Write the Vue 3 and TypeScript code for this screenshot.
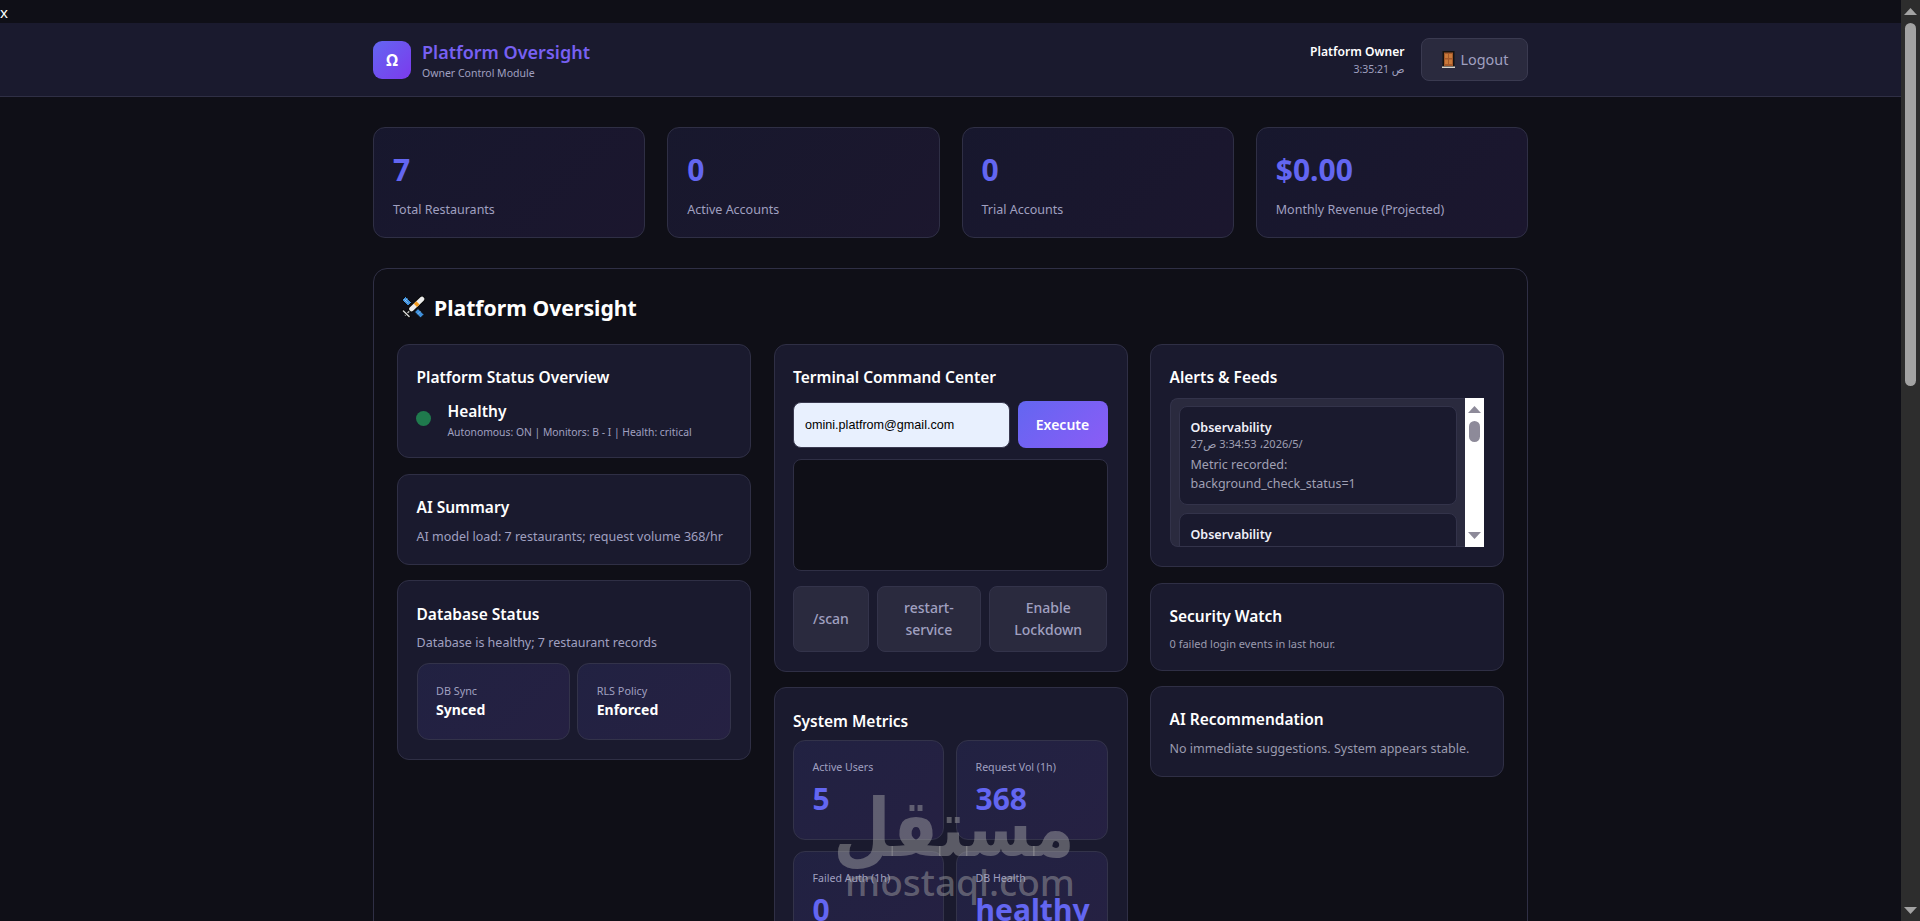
<script setup lang="ts">
const stats = [
  { value: '7', label: 'Total Restaurants' },
  { value: '0', label: 'Active Accounts' },
  { value: '0', label: 'Trial Accounts' },
  { value: '$0.00', label: 'Monthly Revenue (Projected)' },
]
const metrics = [
  { label: 'Active Users', value: '5' },
  { label: 'Request Vol (1h)', value: '368' },
  { label: 'Failed Auth (1h)', value: '0' },
  { label: 'DB Health', value: 'healthy' },
]
const feedDate = '27\u200f/5\u200f/2026\u060c 3:34:53 \u0635'
const clock = '3:35:21 \u0635'
</script>

<template>
  <div class="shell">
    <div class="page">
      <div class="stray">x</div>
      <header class="topbar">
        <div class="wrap topbar-in">
          <div class="brand">
            <div class="logo">Ω</div>
            <div>
              <div class="brand-title">Platform Oversight</div>
              <div class="brand-sub">Owner Control Module</div>
            </div>
          </div>
          <div class="user">
            <div class="user-info">
              <div class="user-name">Platform Owner</div>
              <div class="user-time">{{ clock }}</div>
            </div>
            <button class="logout" type="button">
              <svg class="door" viewBox="0 0 13 17" width="13" height="17" aria-hidden="true">
                <rect x="0.5" y="0" width="12" height="17" fill="#17130f" />
                <rect x="2" y="1.5" width="9" height="13.5" fill="#a4592a" />
                <path d="M3 3h3v4H3zM7 3h3v4H7zM3 8.5h3V13H3zM7 8.5h3V13H7z" fill="#c9793a" />
                <path d="M0 15.5h13V17H0z" fill="#d8d4cc" />
              </svg>
              <span>Logout</span>
            </button>
          </div>
        </div>
      </header>

      <main class="wrap content">
        <section class="stats">
          <div v-for="s in stats" :key="s.label" class="stat">
            <div class="stat-value">{{ s.value }}</div>
            <div class="stat-label">{{ s.label }}</div>
          </div>
        </section>

        <section class="panel">
          <h2 class="panel-title">
            <svg class="sat" viewBox="5 4 24 24" width="24" height="24" aria-hidden="true">
              <path d="M9.5 4.5L15.5 10.5 12 14 6 8z" fill="#3f8fdc" stroke="#0a0a0a" stroke-width="1" />
              <path d="M22 16.5L28 22.5 24.5 26 18.5 20z" fill="#3f8fdc" stroke="#0a0a0a" stroke-width="1" />
              <path d="M8.2 7.2l4 4M11.5 6.5l-3 3M24.5 19.2l-3 3" stroke="#9fd0f5" stroke-width="0.7" fill="none" />
              <path d="M9 23.5L15 17.5" stroke="#0a0a0a" stroke-width="3.4" />
              <path d="M9 23.5L15 17.5" stroke="#b9b9b9" stroke-width="1.6" />
              <path d="M7 18.5L13.5 25" stroke="#0a0a0a" stroke-width="3" stroke-linecap="round" />
              <path d="M7.4 18.9L13.1 24.6" stroke="#d8d8d8" stroke-width="1.4" stroke-linecap="round" />
              <path d="M26 7L15.5 17" stroke="#0a0a0a" stroke-width="6.6" stroke-linecap="round" />
              <path d="M26 7L15.5 17" stroke="#ececec" stroke-width="4.6" stroke-linecap="round" />
              <path d="M22 10.8L19.4 13.3" stroke="#f19a1f" stroke-width="4.6" />
            </svg>
            <span>Platform Oversight</span>
          </h2>

          <div class="columns">
            <div class="col">
              <article class="card">
                <h3 class="card-title status-title">Platform Status Overview</h3>
                <div class="status">
                  <span class="dot"></span>
                  <div>
                    <div class="status-name">Healthy</div>
                    <div class="status-sub">Autonomous: ON | Monitors: B - I | Health: critical</div>
                  </div>
                </div>
              </article>
              <article class="card">
                <h3 class="card-title">AI Summary</h3>
                <p class="card-text">AI model load: 7 restaurants; request volume 368/hr</p>
              </article>
              <article class="card card-db">
                <h3 class="card-title low-title">Database Status</h3>
                <p class="card-text">Database is healthy; 7 restaurant records</p>
                <div class="db-grid">
                  <div class="tile db-tile">
                    <div class="db-label">DB Sync</div>
                    <div class="db-value">Synced</div>
                  </div>
                  <div class="tile db-tile">
                    <div class="db-label">RLS Policy</div>
                    <div class="db-value">Enforced</div>
                  </div>
                </div>
              </article>
            </div>

            <div class="col">
              <article class="card card-term">
                <h3 class="card-title term-title">Terminal Command Center</h3>
                <div class="cmd-row">
                  <input class="cmd-input" value="omini.platfrom@gmail.com" />
                  <button class="exec" type="button">Execute</button>
                </div>
                <div class="term-out"></div>
                <div class="quick">
                  <button class="quick-btn" type="button">/scan</button>
                  <button class="quick-btn" type="button">restart-service</button>
                  <button class="quick-btn" type="button">Enable Lockdown</button>
                </div>
              </article>
              <article class="card">
                <h3 class="card-title low-title metrics-title">System Metrics</h3>
                <div class="metrics">
                  <div v-for="m in metrics" :key="m.label" class="tile metric">
                    <div class="metric-label">{{ m.label }}</div>
                    <div class="metric-value">{{ m.value }}</div>
                  </div>
                </div>
              </article>
            </div>

            <div class="col">
              <article class="card card-feed">
                <h3 class="card-title feed-title">Alerts &amp; Feeds</h3>
                <div class="feed">
                  <div class="feed-list">
                    <div class="feed-item">
                      <div class="feed-name">Observability</div>
                      <div class="feed-date">{{ feedDate }}</div>
                      <div class="feed-msg">Metric recorded: background_check_status=1</div>
                    </div>
                    <div class="feed-item">
                      <div class="feed-name">Observability</div>
                      <div class="feed-date">{{ feedDate }}</div>
                      <div class="feed-msg">Metric recorded: background_check_status=1</div>
                    </div>
                  </div>
                  <div class="feed-scroll">
                    <svg viewBox="0 0 13 7" width="13" height="7" aria-hidden="true"><path d="M6.5 0L13 7H0z" fill="#8d8a99" /></svg>
                    <div class="feed-thumb"></div>
                    <span class="spacer"></span>
                    <svg viewBox="0 0 13 7" width="13" height="7" aria-hidden="true"><path d="M0 0h13L6.5 7z" fill="#8d8a99" /></svg>
                  </div>
                </div>
              </article>
              <article class="card">
                <h3 class="card-title">Security Watch</h3>
                <p class="small-text">0 failed login events in last hour.</p>
              </article>
              <article class="card">
                <h3 class="card-title">AI Recommendation</h3>
                <p class="card-text grey">No immediate suggestions. System appears stable.</p>
              </article>
            </div>
          </div>
        </section>
      </main>
    </div>

    <aside class="pagebar" aria-hidden="true">
      <svg viewBox="0 0 13 7" width="13" height="7"><path d="M6.5 0L13 7H0z" fill="#a3a3a3" /></svg>
      <div class="pagebar-thumb"></div>
      <span class="spacer"></span>
      <svg viewBox="0 0 13 7" width="13" height="7"><path d="M0 0h13L6.5 7z" fill="#a3a3a3" /></svg>
    </aside>

    <div class="watermark" aria-hidden="true">
      <div class="wm-ar">مستقل</div>
      <div class="wm-en">mostaql.com</div>
    </div>
  </div>
</template>

<style>
html, body { margin: 0; background: #0f0f17; }
</style>

<style scoped>
* { box-sizing: border-box; }
.shell {
  position: relative;
  display: flex;
  height: 921px;
  overflow: hidden;
  background: #0f0f17;
  color: #fff;
  font-family: "Noto Sans", "DejaVu Sans", sans-serif;
}
.page { flex: 1; min-width: 0; height: 921px; overflow: hidden; }
.stray { height: 23px; padding-top: 1px; font-size: 15px; line-height: 22px; }
.wrap { width: 1155px; margin: 0 auto; }

.topbar { height: 74px; background: #1a1a2e; border-bottom: 1px solid #2f2f45; }
.topbar-in { display: flex; align-items: center; justify-content: space-between; height: 73px; }
.brand { display: flex; align-items: center; gap: 11px; }
.logo {
  width: 38px; height: 38px; border-radius: 9px;
  display: flex; align-items: center; justify-content: center;
  background: linear-gradient(135deg, #6366f1, #7c3aed);
  font-size: 16px; font-weight: 700;
}
.brand-title {
  font-size: 18px; font-weight: 600; line-height: 29px; margin-top: -1px;
  color: #7760f2;
}
.brand-sub { font-size: 10.5px; line-height: 13px; color: #a0a0c0; }
.user { display: flex; align-items: center; gap: 16px; margin-top: -1px; }
.user-info { text-align: right; }
.user-name { font-size: 12.1px; font-weight: 600; line-height: 19px; }
.user-time { font-size: 10.5px; line-height: 16px; color: #a0a0c0; }
.logout {
  display: flex; align-items: center; gap: 6px;
  width: 107.5px; height: 43px; padding: 0 0 0 20px;
  background: #2a2a3e; border: 1px solid #3a3a50; border-radius: 8px;
  color: #a0a0c0; font: inherit; font-size: 14.4px;
}
.door { flex: none; }

.stats { display: grid; grid-template-columns: repeat(4, minmax(0, 1fr)); gap: 22px; margin-top: 30px; }
.stat {
  height: 111px; padding: 18px 19px 0;
  background: linear-gradient(135deg, rgba(99,102,241,.1), rgba(139,92,246,.1)), #0f0f17;
  border: 1px solid #2f2f45; border-radius: 12px;
}
.stat-value { font-size: 30px; font-weight: 700; line-height: 48px; color: #6366f1; }
.stat-label { margin-top: 5px; font-size: 12.5px; line-height: 21px; color: #a0a0c0; }

.panel {
  margin-top: 30px; padding: 23px 23px 30px;
  border: 1px solid #2f2f45; border-radius: 14px;
}
.panel-title {
  display: flex; align-items: center; gap: 9px;
  margin: 0 0 20px 4px; height: 32px;
  font-size: 21.2px; font-weight: 700; line-height: 32px;
}
.sat { flex: none; }
.columns { display: grid; grid-template-columns: repeat(3, minmax(0, 1fr)); gap: 22.5px; align-items: start; }
.col { display: flex; flex-direction: column; gap: 15.7px; min-width: 0; }
.card {
  padding: 19px 19px 18px 18.5px;
  background: #1a1a2e; border: 1px solid #2f2f45; border-radius: 12px;
}
.card-db, .card-term, .card-feed { padding-bottom: 19px; }
.card-title { margin: 0 0 6px; font-size: 15.5px; font-weight: 600; line-height: 27px; }
.status-title { margin-bottom: 7px; }
.term-title { margin-bottom: 10px; }
.feed-title { margin-bottom: 7.4px; }
.low-title { position: relative; top: 1px; }
.metrics-title { margin-bottom: 6px; }
.card-text { margin: 0; font-size: 12.5px; line-height: 19px; color: #a0a0c0; }
.card-text.grey { color: #9a9aae; }
.small-text { margin: 0; font-size: 11px; line-height: 15.5px; color: #9a9aae; }

.status { display: flex; align-items: center; gap: 16px; }
.dot { flex: none; width: 15px; height: 15px; margin-left: -0.5px; margin-right: 0.5px; border-radius: 50%; background: #1f7a4d; }
.status-name { font-size: 15.5px; font-weight: 600; line-height: 27px; }
.status-sub { font-size: 10.35px; line-height: 14px; color: #a0a0c0; white-space: nowrap; }

.tile {
  background: linear-gradient(135deg, rgba(99,102,241,.1), rgba(139,92,246,.1));
  border: 1px solid #33334a; border-radius: 12px;
}
.db-grid { display: grid; grid-template-columns: repeat(2, minmax(0, 1fr)); gap: 7px; margin-top: 10.7px; }
.db-tile { height: 76.7px; padding: 18px 19px 0 18.5px; }
.db-label { font-size: 10.8px; line-height: 17px; color: #a0a0c0; }
.db-value { font-size: 14px; font-weight: 700; line-height: 22px; }

.cmd-row { display: flex; gap: 7.5px; height: 47px; }
.cmd-input {
  flex: 1; min-width: 0; height: 46px; margin-top: 0.5px; padding: 0 11px;
  background: #e8f0fe; border: 1px solid #3a3a50; border-radius: 8px;
  font-family: "Liberation Sans", Arial, sans-serif; font-size: 12.6px; color: #000;
}
.exec {
  flex: none; width: 90px; height: 47px;
  background: linear-gradient(135deg, #6366f1, #8b5cf6);
  border: 0; border-radius: 8px; color: #fff;
  font: inherit; font-size: 14px; font-weight: 600;
}
.term-out {
  height: 111.4px; margin-top: 11.3px;
  background: #0f0f17; border: 1px solid #2f2f45; border-radius: 8px;
}
.quick { display: grid; grid-template-columns: 75.7fr 105fr 119fr; gap: 7.7px; margin-top: 15.3px; }
.quick-btn {
  height: 65.7px; padding: 0 19px;
  background: #2a2a3e; border: 1px solid #33334a; border-radius: 8px;
  color: #a0a0c0; font: inherit; font-size: 14px; font-weight: 500; line-height: 21.7px;
}

.metrics { display: grid; grid-template-columns: repeat(2, minmax(0, 1fr)); gap: 11.6px; }
.metric { height: 99.4px; padding: 18px 19px 0 18.5px; }
.metric-label { font-size: 10.6px; line-height: 17px; color: #a0a0c0; }
.metric-value { font-size: 30px; font-weight: 700; line-height: 45px; color: #6366f1; }

.feed {
  display: flex; height: 149px;
  background: #2a2a3e; border: 1px solid #33334a; border-right: 0; border-radius: 8px 0 0 8px;
}
.feed-list { flex: 1; min-width: 0; overflow: hidden; padding: 6.3px 7.7px 0 8px; }
.feed-item {
  height: 99px; margin-bottom: 8px; padding: 11px 11px 0;
  background: #1a1a2e; border: 1px solid #33334a; border-radius: 8px;
}
.feed-name { font-size: 12.5px; font-weight: 600; line-height: 19px; color: #f0f0f8; }
.feed-date { font-size: 11px; line-height: 14px; color: #a0a0b4; }
.feed-msg { margin-top: 4px; font-size: 12.5px; line-height: 19.4px; color: #a0a0b4; }
.feed-scroll {
  flex: none; display: flex; flex-direction: column; align-items: center;
  width: 19px; margin: -1px 0 -1px 0; padding: 8px 0 8px; background: #fff;
}
.feed-thumb { width: 11px; height: 21px; margin-top: 8px; border-radius: 6px; background: #8d8a99; }
.spacer { flex: 1; }

.pagebar {
  flex: none; display: flex; flex-direction: column; align-items: center;
  width: 19px; height: 921px; padding: 8px 0 7px; background: #2d2d2d;
}
.pagebar-thumb { width: 11px; height: 363px; margin-top: 8px; border-radius: 6px; background: #a3a3a3; }

.watermark {
  position: absolute; left: 845px; top: 788px; width: 230px;
  color: rgba(170,170,170,.45); text-align: center; pointer-events: none;
}
.wm-ar {
  height: 82px; margin-left: -12px; font-family: "DejaVu Sans", sans-serif; font-size: 66px; font-weight: 700; line-height: 82px;
  transform: scaleY(1.22);
}
.wm-en { margin-top: -10px; font-size: 37px; font-weight: 500; line-height: 44px; white-space: nowrap; }
</style>
